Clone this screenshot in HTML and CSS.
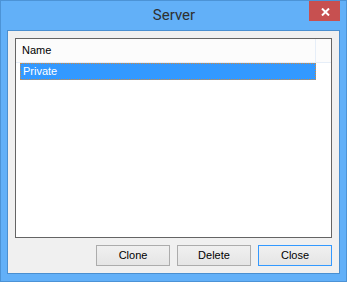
FILE: index.html
```html
<!DOCTYPE html>
<html>
<head>
<meta charset="utf-8">
<link rel="stylesheet" href="styles.css">
</head>
<body>
<div class="window">
  <div class="titlebar">
    <span class="title">Server</span>
    <div class="close-x">
      <svg width="9" height="8" viewBox="0 0 9 8"><path d="M1 0.5 L8 7.5 M8 0.5 L1 7.5" stroke="#fff" stroke-width="2" fill="none"/></svg>
    </div>
  </div>
  <div class="client">
    <div class="list">
      <div class="header">
        <div class="col col-name">Name</div>
        <div class="col col-rest"></div>
      </div>
      <div class="rows">
        <div class="row selected">Private</div>
      </div>
    </div>
    <div class="buttons">
      <button class="btn">Clone</button>
      <button class="btn">Delete</button>
      <button class="btn default">Close</button>
    </div>
  </div>
</div>
</body>
</html>
```
FILE: styles.css
```css
* { box-sizing: border-box; }
html, body { margin: 0; padding: 0; }
body { width: 347px; height: 282px; overflow: hidden; background: #fff; }

.window {
  width: 347px;
  height: 282px;
  border: 1px solid #4c93d6;
  background: #62b0f8;
  display: flex;
  flex-direction: column;
}

.titlebar {
  height: 29px;
  position: relative;
  display: flex;
  justify-content: center;
  align-items: flex-start;
  flex: none;
}

.title {
  font-family: Roboto, "Noto Sans", sans-serif;
  font-size: 15px;
  line-height: 29px;
  color: #2f2f2f;
  padding-left: 1px;
}

.close-x {
  position: absolute;
  top: 0;
  right: 6px;
  width: 31px;
  height: 20px;
  background: #c75050;
  display: flex;
  align-items: center;
  justify-content: center;
}
.close-x svg { display: block; margin-left: 1px; margin-top: 1px; }

.client {
  flex: 1;
  margin: 0 6px 7px 6px;
  border: 1px solid #4a8fd0;
  background: #f0f0f0;
  padding: 7px;
  display: flex;
  flex-direction: column;
  gap: 7px;
}

.list {
  flex: 1;
  border: 1px solid #646464;
  background: #fff;
  display: flex;
  flex-direction: column;
  font-family: "Liberation Sans", Arial, sans-serif;
  font-size: 11px;
}

.header {
  height: 24px;
  display: flex;
  background: #fcfcfc;
  border-bottom: 1px solid #e6eef8;
  flex: none;
}
.col { height: 23px; line-height: 22px; color: #000; }
.col-name {
  width: 300px;
  padding-left: 6px;
  border-right: 1px solid #e6eef8;
}
.col-rest { flex: 1; }

.rows { padding-left: 4px; }
.row {
  width: 296px;
  height: 17px;
  line-height: 15px;
  padding-left: 2px;
  color: #fff;
}
.row.selected {
  background: #3399ff;
  border: 1px dotted #d58a3c;
}

.buttons {
  display: flex;
  justify-content: flex-end;
  gap: 7px;
  flex: none;
}
.btn {
  width: 74px;
  height: 21px;
  margin: 0;
  padding: 0;
  border: 1px solid #acacac;
  background: linear-gradient(#f0f0f0, #e5e5e5);
  font-family: "Liberation Sans", Arial, sans-serif;
  font-size: 11px;
  color: #000;
  line-height: 19px;
  border-radius: 0;
}
.btn.default { border-color: #3399ff; }
```
